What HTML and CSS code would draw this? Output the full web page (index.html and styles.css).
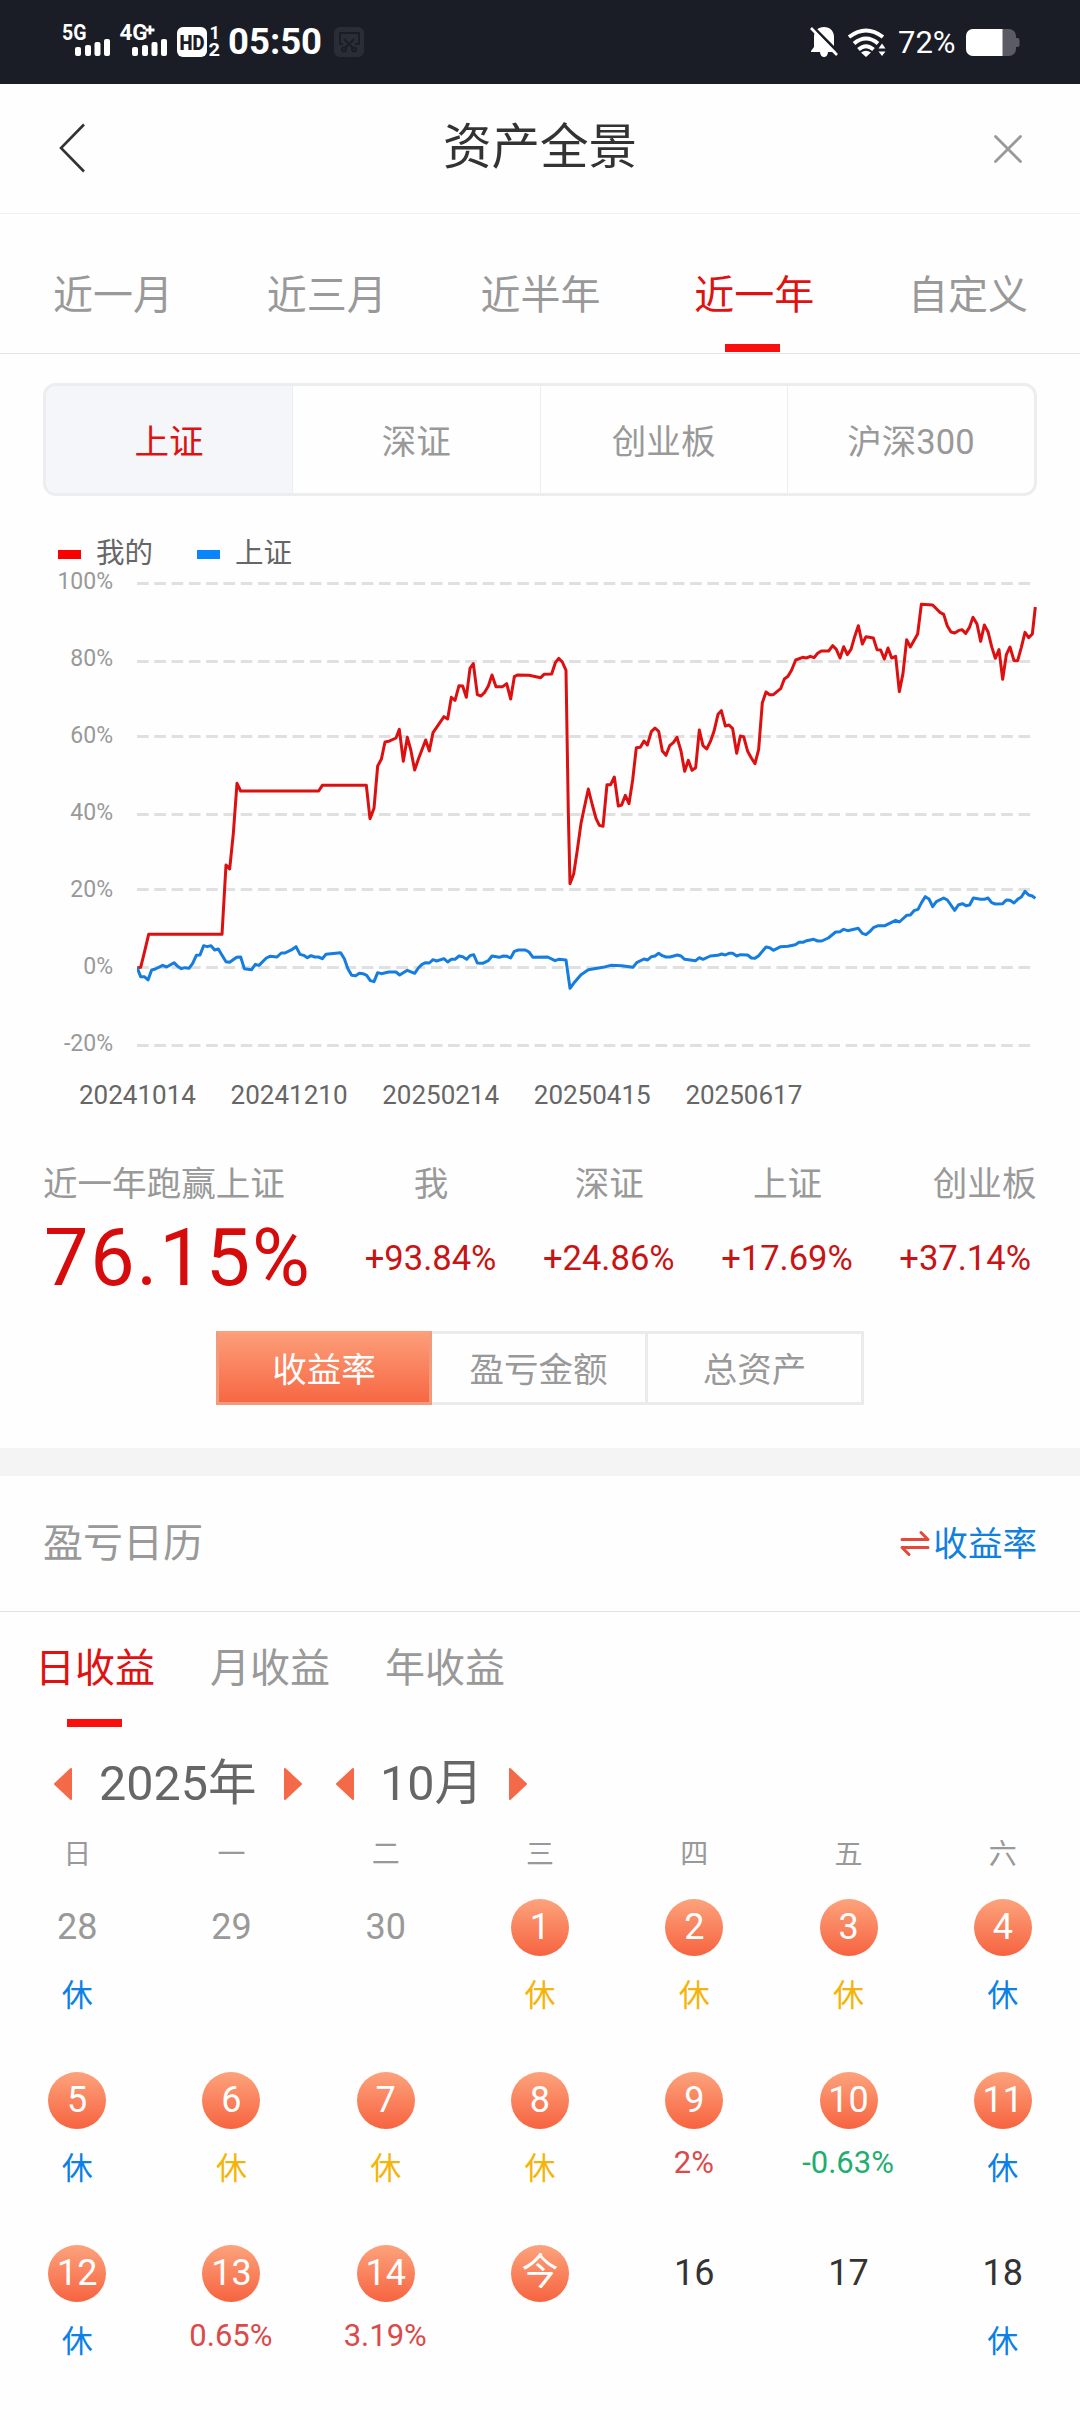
FILE: index.html
```html
<!DOCTYPE html>
<html lang="zh-CN">
<head>
<meta charset="utf-8">
<title>资产全景</title>
<link rel="stylesheet" href="styles.css">
</head>
<body>
<div class="statusbar">
  <svg class="signals" width="160" height="36" viewBox="0 0 160 36">
    <g fill="#fff">
      <text class="net" x="-1" y="17" textLength="24.500" lengthAdjust="spacingAndGlyphs">5G</text>
      <rect x="12" y="24" width="6" height="9" rx="2"/><rect x="22" y="22" width="6" height="11" rx="2"/><rect x="31.500" y="19" width="6" height="14" rx="2"/><rect x="41" y="16" width="6" height="17" rx="2"/>
      <text class="net" x="56.500" y="17" textLength="28" lengthAdjust="spacingAndGlyphs">4G</text>
      <path d="M82.500 7h9M87 2.500v9" stroke="#fff" stroke-width="2.800"/>
      <rect x="69" y="24" width="6" height="9" rx="2"/><rect x="79" y="22" width="6" height="11" rx="2"/><rect x="88.500" y="19" width="6" height="14" rx="2"/><rect x="98" y="16" width="6" height="17" rx="2"/>
      <rect x="114" y="4" width="30" height="30" rx="6"/>
      <text class="sim" x="146.500" y="16">1</text>
      <text class="sim" x="145.500" y="33" textLength="11.500" lengthAdjust="spacingAndGlyphs">2</text>
    </g>
    <text class="hd" x="116.500" y="26.500" textLength="25" lengthAdjust="spacingAndGlyphs">HD</text>
  </svg>
  <span class="clock">05:50</span>
  <svg class="snip" width="30" height="30" viewBox="0 0 30 30" fill="none" stroke="#1b1d26" stroke-width="2">
    <rect width="30" height="30" rx="6" fill="#2b2d36" stroke="none"/>
    <path d="M9 17H6V6H25V17H21M10 12L19 21M20 12L11 21"/><circle cx="10" cy="22.500" r="2"/><circle cx="20" cy="22.500" r="2"/>
  </svg>
  <svg class="bell" width="28" height="32" viewBox="0 0 28 32">
    <path d="M14 1C8 1 4 5 4 11v10l-3 4v1h9c0 3 2 5 4 5s4-2 4-5h8v-3l-2-2V11C24 5 20 1 14 1Z" fill="#fff"/>
    <path d="M3 1L28 26" stroke="#1a1c26" stroke-width="3"/><path d="M1 2L27 29" stroke="#fff" stroke-width="2.600"/>
  </svg>
  <svg class="wifi" width="40" height="30" viewBox="0 0 40 30">
    <g fill="none" stroke="#fff" stroke-width="4"><path d="M2 9Q19-4 36 9"/><path d="M7 15.500Q19 5.500 31 15.500"/><path d="M11.500 21.500Q19 15 26.500 21.500"/></g>
    <path d="M19 29L14 24.500Q19 21 24 24.500ZM31.500 20.500L35 15.500L38.500 20.500ZM31.500 23.500L35 28L38.500 23.500Z" fill="#fff"/>
  </svg>
  <span class="charge">72%</span>
  <svg class="battery" width="54" height="27" viewBox="0 0 54 27">
    <path d="M7 0H43a7 7 0 0 1 7 7V9h1.500a2 2 0 0 1 2 2v5a2 2 0 0 1-2 2H50v2a7 7 0 0 1-7 7H7a7 7 0 0 1-7-7V7a7 7 0 0 1 7-7Z" fill="#5a5b64"/>
    <path d="M7 0H36.500V27H7a7 7 0 0 1-7-7V7a7 7 0 0 1 7-7Z" fill="#fff"/>
  </svg>
</div>

<header class="header">
  <svg width="26" height="50" viewBox="0 0 26 50" fill="none" stroke="#333" stroke-width="2.600"><path d="M25 1.500L2 25L25 48.500"/></svg>
  <h1>资产全景</h1>
  <svg width="30" height="30" viewBox="0 0 30 30" stroke="#999" stroke-width="2.800" stroke-linecap="round"><path d="M2.500 3.500L27.500 28.500M27.500 3.500L2.500 28.500"/></svg>
</header>

<nav class="periods">
  <span>近一月</span><span>近三月</span><span>近半年</span><span class="active">近一年</span><span>自定义</span>
</nav>

<div class="indexes">
  <span class="active">上证</span><span>深证</span><span>创业板</span><span>沪深300</span>
</div>

<div class="legend"><i class="mine"></i><span>我的</span><i class="sse"></i><span>上证</span></div>

<div class="chart">
  <div class="axis"><span>100%</span><span>80%</span><span>60%</span><span>40%</span><span>20%</span><span>0%</span><span>-20%</span></div>
  <svg class="plot" width="900" height="500" viewBox="291 0 2700 1500" fill="none">
    <g stroke="#e0e0e0" stroke-width="9" stroke-dasharray="35 16.850">
      <path d="M291 70.500H2987"/><path d="M291 304.500H2987"/><path d="M291 529.500H2987"/><path d="M291 763.500H2987"/><path d="M291 988.500H2987"/><path d="M291 1222.500H2987"/><path d="M291 1456.500H2987"/>
    </g>
    <polyline class="line-mine" points="291,1224 302,1222 313,1178 326,1123 546,1123 558,915 569,927 580,820 591,670 602,693 836,693 847,676 979,676 990,776 1002,745 1013,618 1024,598 1035,546 1046,544 1068,534 1078,508 1090,604 1102,532 1112,568 1124,630 1135,598 1157,540 1168,573 1179,518 1212,470 1223,477 1234,412 1245,421 1257,377 1268,378 1279,412 1290,325 1300,311 1312,404 1323,408 1334,397 1345,378 1356,345 1368,380 1388,380 1400,371 1412,417 1423,350 1432,345 1467,346 1502,353 1512,343 1535,342 1546,308 1556,295 1567,306 1578,331 1585,760 1590,971 1601,942 1612,870 1623,790 1634,738 1645,687 1657,735 1668,775 1678,796 1689,799 1701,674 1712,674 1723,651 1735,738 1745,735 1756,706 1767,731 1778,660 1789,563 1801,562 1812,543 1822,555 1834,515 1845,504 1856,514 1867,573 1878,586 1889,557 1900,548 1911,532 1923,573 1934,634 1945,601 1956,631 1967,623 1978,510 1989,557 2000,567 2011,545 2022,514 2034,463 2044,452 2056,498 2067,495 2078,506 2090,580 2101,528 2111,530 2123,574 2134,594 2145,611 2156,568 2167,428 2178,396 2189,404 2200,404 2222,386 2233,357 2244,349 2255,330 2267,300 2288,292 2299,294 2311,289 2322,293 2333,280 2344,273 2366,273 2378,257 2389,268 2400,294 2411,260 2422,284 2433,268 2444,230 2455,197 2467,252 2478,230 2500,234 2511,269 2522,270 2533,297 2544,264 2555,294 2567,289 2578,395 2589,340 2600,239 2611,261 2633,222 2644,133 2678,135 2700,157 2711,163 2722,198 2733,216 2744,219 2755,212 2766,209 2777,220 2788,203 2799,172 2811,192 2822,244 2833,195 2844,215 2855,260 2866,295 2877,269 2888,358 2899,284 2910,261 2922,302 2933,302 2944,262 2955,217 2966,233 2977,222 2986,141"/>
    <polyline class="line-sse" points="291,1222 302,1250 313,1250 324,1260 335,1230 346,1227 368,1216 380,1221 402,1208 413,1219 424,1226 435,1223 447,1225 458,1210 469,1186 480,1185 491,1157 502,1160 513,1157 524,1170 535,1167 547,1187 558,1205 569,1207 590,1192 602,1191 613,1226 635,1229 646,1213 657,1216 679,1194 690,1189 711,1191 724,1179 735,1179 757,1168 768,1160 780,1183 791,1186 802,1193 813,1187 824,1191 835,1191 847,1196 858,1183 902,1178 913,1196 924,1227 935,1246 947,1247 958,1240 969,1241 980,1246 991,1262 1002,1265 1013,1238 1024,1241 1046,1236 1068,1236 1079,1245 1102,1231 1124,1240 1135,1224 1146,1213 1157,1208 1168,1209 1179,1199 1190,1203 1212,1196 1223,1206 1234,1198 1245,1198 1257,1188 1268,1190 1280,1198 1290,1187 1301,1184 1312,1209 1328,1210 1345,1202 1356,1188 1378,1192 1390,1188 1401,1189 1412,1194 1423,1174 1435,1170 1456,1170 1467,1176 1479,1192 1523,1191 1545,1202 1556,1198 1578,1200 1590,1285 1601,1270 1623,1244 1645,1229 1689,1222 1712,1216 1745,1217 1779,1222 1790,1208 1812,1197 1823,1200 1834,1190 1845,1188 1856,1180 1867,1187 1878,1191 1890,1191 1912,1185 1923,1188 1934,1198 1967,1202 1978,1193 1989,1198 2011,1188 2033,1186 2045,1182 2056,1185 2067,1180 2078,1180 2090,1188 2101,1184 2123,1185 2134,1194 2145,1195 2156,1187 2178,1161 2189,1163 2200,1171 2222,1160 2244,1159 2266,1154 2277,1147 2289,1147 2300,1142 2321,1138 2333,1143 2345,1143 2365,1134 2387,1116 2400,1115 2411,1108 2423,1112 2455,1105 2467,1120 2478,1124 2489,1115 2500,1103 2515,1097 2535,1097 2567,1081 2578,1086 2600,1066 2611,1065 2622,1052 2634,1048 2645,1027 2656,1010 2667,1017 2678,1040 2689,1025 2711,1014 2722,1020 2744,1051 2755,1035 2767,1031 2778,1037 2789,1035 2800,1014 2822,1018 2833,1018 2844,1014 2855,1028 2866,1032 2888,1031 2899,1020 2910,1021 2922,1029 2933,1018 2944,1011 2955,994 2966,1005 2977,1008 2986,1015"/>
  </svg>
</div>
<div class="dates"><span>20241014</span><span>20241210</span><span>20250214</span><span>20250415</span><span>20250617</span></div>

<section class="stats">
  <div class="stat main"><span class="label">近一年跑赢上证</span><b>76.15%</b></div>
  <div class="stat"><span class="label">我</span><em>+93.84%</em></div>
  <div class="stat"><span class="label">深证</span><em>+24.86%</em></div>
  <div class="stat"><span class="label">上证</span><em>+17.69%</em></div>
  <div class="stat last"><span class="label">创业板</span><em>+37.14%</em></div>
</section>

<div class="modes"><span class="active">收益率</span><span>盈亏金额</span><span>总资产</span></div>

<section class="calendar">
  <div class="cal-head">
    <h2>盈亏日历</h2>
    <span class="switch">
      <svg width="30" height="27" viewBox="0 0 30 27" fill="none" stroke="#e5483a" stroke-width="3" stroke-linecap="round" stroke-linejoin="round"><path d="M2 9.500H28L21 2.500M28 17.500H2L9 24.500"/></svg>收益率
    </span>
  </div>
  <div class="cal-tabs"><span class="active">日收益</span><span>月收益</span><span>年收益</span></div>
  <div class="picker">
    <svg class="tri" viewBox="0 0 20 34"><path d="M18 2V32L2 17Z"/></svg>
    <span class="year">2025年</span>
    <svg class="tri" viewBox="0 0 20 34"><path d="M2 2V32L18 17Z"/></svg>
    <svg class="tri month-prev" viewBox="0 0 20 34"><path d="M18 2V32L2 17Z"/></svg>
    <span class="month">10月</span>
    <svg class="tri" viewBox="0 0 20 34"><path d="M2 2V32L18 17Z"/></svg>
  </div>
  <div class="week"><span>日</span><span>一</span><span>二</span><span>三</span><span>四</span><span>五</span><span>六</span></div>
  <div class="days">
    <div class="day out"><b>28</b><i class="rest">休</i></div>
    <div class="day out"><b>29</b></div>
    <div class="day out"><b>30</b></div>
    <div class="day on"><b>1</b><i class="holiday">休</i></div>
    <div class="day on"><b>2</b><i class="holiday">休</i></div>
    <div class="day on"><b>3</b><i class="holiday">休</i></div>
    <div class="day on"><b>4</b><i class="rest">休</i></div>
    <div class="day on"><b>5</b><i class="rest">休</i></div>
    <div class="day on"><b>6</b><i class="holiday">休</i></div>
    <div class="day on"><b>7</b><i class="holiday">休</i></div>
    <div class="day on"><b>8</b><i class="holiday">休</i></div>
    <div class="day on"><b>9</b><em class="up">2%</em></div>
    <div class="day on"><b>10</b><em class="down">-0.63%</em></div>
    <div class="day on"><b>11</b><i class="rest">休</i></div>
    <div class="day on"><b>12</b><i class="rest">休</i></div>
    <div class="day on"><b>13</b><em class="up">0.65%</em></div>
    <div class="day on"><b>14</b><em class="up">3.19%</em></div>
    <div class="day on today"><b>今</b></div>
    <div class="day"><b>16</b></div>
    <div class="day"><b>17</b></div>
    <div class="day"><b>18</b><i class="rest">休</i></div>
  </div>
</section>
</body>
</html>
```
FILE: styles.css
```css
* { box-sizing: border-box; }
body {
  margin: 0;
  width: 1080px;
  height: 2420px;
  overflow: hidden;
  background: #fefefe;
  color: #999;
  font-family: Roboto, "Noto Sans CJK SC", sans-serif;
  font-size: 34.56px;
}
h1, h2, b, em, i { margin: 0; font-weight: 400; font-style: normal; }
svg { display: block; flex: none; }

.statusbar {
  display: flex;
  align-items: flex-start;
  height: 84px;
  padding: 0 60px 0 63px;
  background: #1a1c26;
  color: #fff;
}
.signals { margin-top: 23px; overflow: visible; }
.net { font-size: 21.500px; font-weight: 700; }
.sim { font-size: 18px; font-weight: 700; }
.hd { font-size: 20px; font-weight: 900; fill: #1a1c26; }
.clock { width: 92px; margin: 20px 0 0 5px; font-size: 36.500px; font-weight: 700; line-height: 43px; white-space: nowrap; }
.snip { margin: 27px 0 0 14px; }
.bell { margin: 26px 0 0 auto; }
.wifi { margin: 28px 0 0 9px; }
.charge { width: 59px; margin: 25px 0 0 11px; font-size: 31px; line-height: 36px; }
.battery { margin: 29px 0 0 9px; }

.header {
  display: flex;
  align-items: center;
  justify-content: space-between;
  height: 130px;
  padding: 0 57px 2px 59px;
  border-bottom: 1px solid #f0f0f0;
}
.header h1 { margin-left: 2px; color: #333; font-size: 48.500px; line-height: 71px; }

.periods {
  display: flex;
  justify-content: space-between;
  height: 140px;
  padding: 0 52px 0 53px;
  border-bottom: 1px solid #e4e4e4;
  font-size: 40px;
  line-height: 163px;
}
.active { color: #e01111; }
.periods .active, .cal-tabs .active { display: flex; flex-direction: column; align-items: center; }
.periods .active::after, .cal-tabs .active::after { content: ""; width: 55px; height: 8px; background: #fa0f0f; }
.periods .active::after { margin: -33px 3px 0 0; }

.indexes {
  display: flex;
  height: 113px;
  margin: 29px 43px 0;
  border: 3px solid #ebedee;
  border-radius: 13px;
  line-height: 113px;
  text-align: center;
  overflow: hidden;
}
.indexes span { flex: 1; }
.indexes span + span { border-left: 1px solid #ebedee; }
.indexes .active { background: #f4f6f9; }

.legend {
  display: flex;
  align-items: center;
  height: 40px;
  margin-top: 36px;
  padding-left: 58px;
  color: #666;
  font-size: 28.500px;
  line-height: 40px;
}
.legend span { padding-top: 3px; }
.legend i { width: 23px; height: 9px; margin: 5px 15px 0 0; background: #fb0000; }
.legend .sse { margin-left: 44px; background: #0a84ff; }

.chart { display: flex; height: 500px; margin-top: -12px; }
.axis { display: flex; flex-direction: column; width: 113px; padding-top: 3px; font-size: 23px; line-height: 38px; text-align: right; gap: 39px; }
.plot { margin-left: 24px; }
.line-mine, .line-sse { stroke-width: 9; stroke-linejoin: round; }
.line-mine { stroke: #dc1010; }
.line-sse { stroke: #157de0; }

.dates { display: flex; height: 56px; margin-top: 15px; padding-left: 79px; color: #666; font-size: 26px; line-height: 40px; }
.dates span { width: 151.600px; }

.stats { display: flex; height: 176px; margin-top: 24px; padding-left: 43px; }
.stat { display: flex; flex-direction: column; align-items: center; width: 178.200px; flex: none; }
.stat.main { width: 299px; align-items: flex-start; }
.stat .label { line-height: 50px; margin-top: 4px; white-space: nowrap; }
.stat.last .label { margin-right: -38px; }
.stat b { margin: -1px 0 0 1px; color: #d60b0b; font-size: 79px; line-height: 100px; letter-spacing: 1.900px; }
.stat em { margin: 27px 1px 0 0; color: #c81414; line-height: 44px; }

.modes { display: flex; height: 74px; margin: 0 216px; line-height: 72px; text-align: center; }
.modes span { width: 216px; border: 3px solid #ebebeb; border-left-width: 0; }
.modes .active { color: #fff; background: linear-gradient(#fc9f7a, #f76541) border-box; border: 3px solid #f29a7c; border-top-color: #fca07c; }

.calendar { margin-top: 43px; border-top: 28px solid #f4f4f4; }
.cal-head { display: flex; justify-content: space-between; height: 136px; padding: 0 43px; border-bottom: 1px solid #e2e2e2; line-height: 132px; }
.cal-head h2 { font-size: 40px; line-height: 135px; }
.switch { display: flex; align-items: center; gap: 3px; color: #1080e0; }
.cal-tabs { display: flex; gap: 55px; height: 120px; padding-left: 35px; font-size: 40px; line-height: 114px; }
.cal-tabs .active::after { margin: -7px 1px 0 0; }

.picker { display: flex; align-items: center; height: 104px; padding-left: 53px; color: #666; font-size: 48.500px; line-height: 70px; }
.tri { width: 20px; height: 34px; fill: #f46a48; stroke: #f46a48; stroke-width: 2; stroke-linejoin: round; }
.year { width: 158px; margin: 0 26px 0 26px; white-space: nowrap; }
.month-prev { margin-left: 32px; }
.month { width: 102px; margin: 0 26px 0 25px; white-space: nowrap; }

.week, .days { display: grid; grid-template-columns: repeat(7, 1fr); text-align: center; }
.week { height: 63px; font-size: 28px; line-height: 38px; }
.day { display: flex; flex-direction: column; align-items: center; height: 172.900px; color: #333; }
.day b { width: 58px; height: 57px; border-radius: 50%; font-size: 36px; line-height: 56px; }
.day.out b { color: #999; }
.day.on b { color: #fff; background: linear-gradient(#fca37c, #f76340); }
.day.today b { font-size: 37px; }
.day i { margin-top: 17px; font-size: 31px; line-height: 46px; }
.day em { margin: 13px 1px 0 0; font-size: 31px; line-height: 42px; }
.rest { color: #0b80e6; }
.holiday { color: #f5b40a; }
.up { color: #da4a4a; }
.down { color: #22ad70; }
```
